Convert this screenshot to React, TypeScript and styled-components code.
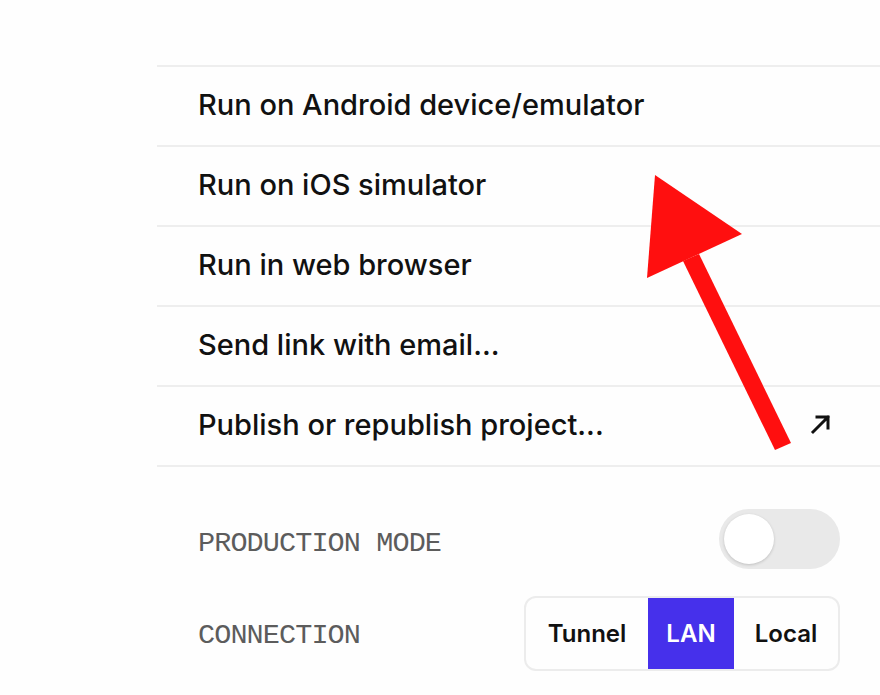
import React from 'react';
import styled, { createGlobalStyle } from 'styled-components';

const GlobalStyle = createGlobalStyle`
  html, body {
    margin: 0;
    padding: 0;
    background: #fefefe;
  }
  body {
    font-family: 'Inter', 'Liberation Sans', sans-serif;
    color: #111;
  }
`;

const Page = styled.div`
  position: relative;
  width: 880px;
  height: 695px;
  overflow: hidden;
  padding: 65px 0 0 157px;
  box-sizing: border-box;
`;

const Panel = styled.div`
  display: flex;
  flex-direction: column;
`;

const Menu = styled.div`
  display: flex;
  flex-direction: column;
  border-top: 2px solid #eeeeee;
`;

const MenuItem = styled.div`
  height: 74px;
  display: flex;
  align-items: center;
  justify-content: space-between;
  padding: 0 48px 4px 41px;
  box-sizing: content-box;
  border-bottom: 2px solid #eeeeee;
  font-size: 29px;
  font-weight: 500;
  color: #111;
`;

const Settings = styled.div`
  display: flex;
  flex-direction: column;
  padding: 41px 40px 0 41px;
  gap: 30px;
`;

const SettingRow = styled.div`
  display: flex;
  align-items: center;
  justify-content: space-between;
  height: 62px;
`;

const Label = styled.span`
  font-family: 'Liberation Mono', 'DejaVu Sans Mono', monospace;
  font-size: 28.5px;
  letter-spacing: -0.9px;
  color: #5c5c5c;
  padding-top: 8px;
`;

const Toggle = styled.div<{ on?: boolean }>`
  width: 121px;
  height: 60px;
  border-radius: 30px;
  background: ${(p) => (p.on ? '#4630eb' : '#e9e9e9')};
  display: flex;
  align-items: center;
  padding: 0 5px;
  box-sizing: border-box;
`;

const Knob = styled.div`
  width: 50px;
  height: 50px;
  border-radius: 50%;
  background: #fff;
  box-shadow: 0 1px 3px rgba(0, 0, 0, 0.18);
`;

const Segmented = styled.div`
  display: flex;
  height: 75px;
  border: 2px solid #ececec;
  border-radius: 12px;
  overflow: hidden;
  box-sizing: border-box;
  margin-top: 5px;
`;

const Segment = styled.div<{ active?: boolean; w: number }>`
  width: ${(p) => p.w}px;
  display: flex;
  align-items: center;
  justify-content: center;
  font-size: 24px;
  font-weight: 600;
  color: ${(p) => (p.active ? '#fff' : '#111')};
  background: ${(p) => (p.active ? '#4630eb' : 'transparent')};
`;

const Overlay = styled.svg`
  position: absolute;
  left: 0;
  top: 0;
  pointer-events: none;
`;

const ExternalIcon = () => (
  <svg width="22" height="22" viewBox="0 0 22 22" fill="none">
    <path d="M3 19 L18 4 M7 4 H18 V15" stroke="#111" strokeWidth="3" strokeLinecap="square" />
  </svg>
);

const items = [
  'Run on Android device/emulator',
  'Run on iOS simulator',
  'Run in web browser',
  'Send link with email...',
  'Publish or republish project...',
];

export default function App() {
  return (
    <>
      <GlobalStyle />
      <Page>
        <Panel>
          <Menu>
            {items.map((label, i) => (
              <MenuItem key={label}>
                <span>{label}</span>
                {i === items.length - 1 && <ExternalIcon />}
              </MenuItem>
            ))}
          </Menu>
          <Settings>
            <SettingRow>
              <Label>PRODUCTION MODE</Label>
              <Toggle>
                <Knob />
              </Toggle>
            </SettingRow>
            <SettingRow>
              <Label>CONNECTION</Label>
              <Segmented>
                <Segment w={122}>Tunnel</Segment>
                <Segment w={86} active>
                  LAN
                </Segment>
                <Segment w={104}>Local</Segment>
              </Segmented>
            </SettingRow>
          </Settings>
        </Panel>
        <Overlay width="880" height="695" viewBox="0 0 880 695">
          <polygon points="775,450 791,443 699,254 683,261" fill="#ff0f0f" />
          <polygon points="655,175 647,278 742,234" fill="#ff0f0f" />
        </Overlay>
      </Page>
    </>
  );
}
